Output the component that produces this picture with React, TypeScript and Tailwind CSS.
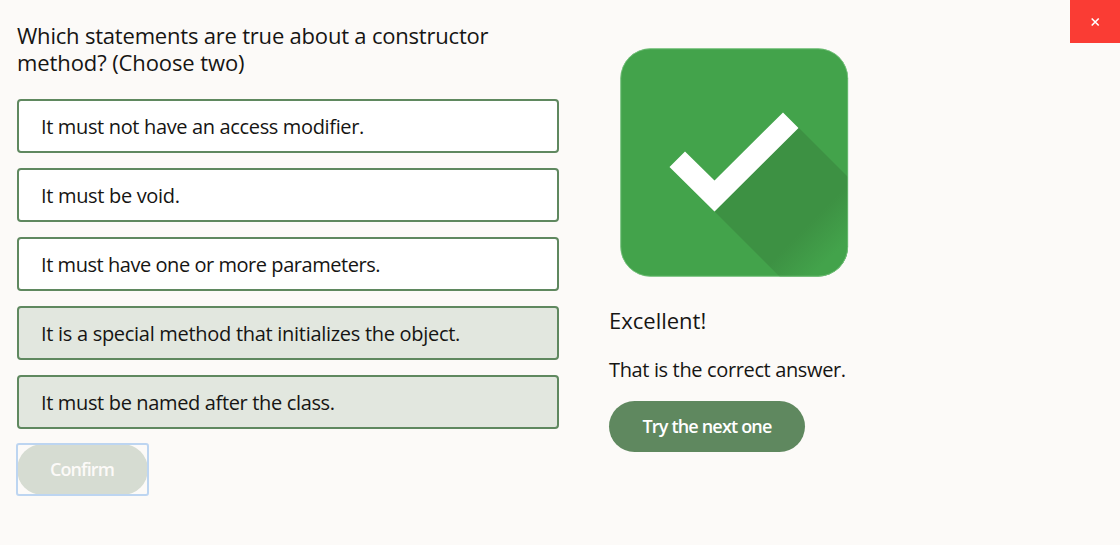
const answers = [
  { text: "It must not have an access modifier.", selected: false, tracking: "tracking-[-0.35px]" },
  { text: "It must be void.", selected: false, tracking: "tracking-[-0.32px]" },
  { text: "It must have one or more parameters.", selected: false, tracking: "tracking-[-0.45px]" },
  { text: "It is a special method that initializes the object.", selected: true, tracking: "tracking-[-0.29px]" },
  { text: "It must be named after the class.", selected: true, tracking: "tracking-[-0.35px]" },
];

function CheckPicture() {
  return (
    <svg className="ml-[11px] block" width="229" height="229" viewBox="0 0 229 229">
      <defs>
        <linearGradient id="shade" gradientUnits="userSpaceOnUse" x1="136" y1="122" x2="217" y2="203">
          <stop offset="0" stopColor="#3d9143" />
          <stop offset="0.66" stopColor="#3d9143" />
          <stop offset="1" stopColor="#43a34b" />
        </linearGradient>
        <clipPath id="tile">
          <rect x="0.5" y="0.5" width="227.5" height="228" rx="30" />
        </clipPath>
      </defs>
      <rect x="0.5" y="0.5" width="227.5" height="228" rx="30" fill="#43a34b" />
      <path d="M94.5 163.5 L178 79 L308 209 L224 293 Z" fill="url(#shade)" clipPath="url(#tile)" />
      <rect x="0.75" y="0.75" width="227" height="227.5" rx="29.7" fill="none" stroke="#7bc481" strokeWidth="0.8" />
      <path d="M49.5 119 L65 103.5 L94.5 132.5 L163 64.5 L178.5 80 L94.5 163.5 Z" fill="#fff" />
    </svg>
  );
}

export default function App() {
  return (
    <main className="relative flex h-[545px] w-full overflow-hidden bg-[#fcfaf8] pl-[17px] font-['Open_Sans',sans-serif] text-[#161513]">
      <section className="w-[542px] pt-[22px]">
        <h1 className="text-[22px] leading-[27px]">
          <span className="block tracking-[-0.2px]">Which statements are true about a constructor</span>
          <span className="block tracking-[-0.1px]">method? (Choose two)</span>
        </h1>
        <div className="mt-[23px] flex flex-col gap-[15px]">
          {answers.map((a) => (
            <button key={a.text} className={`flex h-[54px] items-center rounded-[4px] border-2 border-[#5f885f] pl-[22px] pt-[2px] text-left text-[20px] ${a.tracking} ${a.selected ? "bg-[#e2e7df]" : "bg-white"}`}>
              {a.text}
            </button>
          ))}
        </div>
        <div className="relative mt-[15px] h-[51px] w-[131px]">
          <button className="flex h-full w-full items-center justify-center rounded-full bg-[#d6dcd2] pr-px text-[18px] font-semibold tracking-[-0.9px] text-[#fcfaf8]">Confirm</button>
          <span className="pointer-events-none absolute -inset-px rounded-[3px] border-2 border-[#bdd5f1]" />
        </div>
      </section>
      <section className="ml-[50px] pt-[48px]">
        <CheckPicture />
        <p className="mt-[27px] text-[22px] leading-[33px]">Excellent!</p>
        <p className="mt-[18px] text-[20px] leading-[30px] tracking-[-0.36px]">That is the correct answer.</p>
        <button className="mt-[16px] flex h-[51px] w-[196px] items-center justify-center rounded-full bg-[#5f885f] text-[18px] font-semibold tracking-[-0.82px] text-white">Try the next one</button>
      </section>
      <button className="absolute right-0 top-0 flex h-[43px] w-[50px] items-center justify-center bg-[#fa3c34] text-white">
        <svg width="10" height="10" viewBox="0 0 10 10" stroke="currentColor" strokeWidth="1.6"><path d="M1.7 1.5l7 7M8.7 1.5l-7 7" /></svg>
      </button>
    </main>
  );
}
